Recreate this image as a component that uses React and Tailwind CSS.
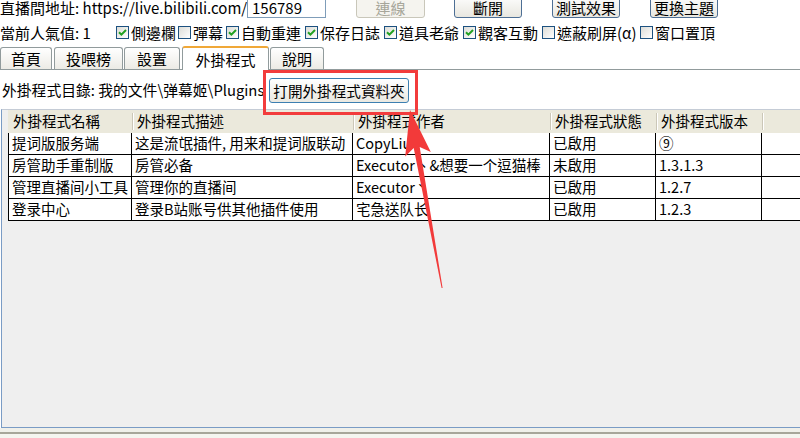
import React from "react";

const Check = ({ on }) => (
  <span className="relative inline-flex h-[13px] w-[13px] shrink-0 items-center justify-center border border-[#1c5180] bg-linear-to-br from-[#dcdcd7] to-white">
    {on && (
      <svg width="9" height="9" viewBox="0 0 9 9" className="block">
        <path d="M1 4.2 L3.4 6.6 L8 2" fill="none" stroke="#21a121" strokeWidth="2" />
      </svg>
    )}
  </span>
);

const CB = ({ on, label, w }) => (
  <div className={`flex items-center gap-[2px] ${w}`}>
    <Check on={on} />
    <span className="whitespace-nowrap">{label}</span>
  </div>
);

const Tab = ({ label, w, sel }) =>
  sel ? (
    <div className={`${w} relative z-10 -mb-px flex h-[24px] items-center justify-center rounded-t-[3px] border-x border-t-2 border-x-[#919b9c] border-t-[#f0a838] bg-white`}>
      {label}
    </div>
  ) : (
    <div className={`${w} flex h-[22px] items-center justify-center rounded-t-[3px] border border-b-0 border-[#919b9c] bg-linear-to-b from-white to-[#ecebe5]`}>
      {label}
    </div>
  );

const cols = ["w-[124px]", "w-[221px]", "w-[197px]", "w-[106px]", "w-[106px]", "flex-1"];
const headers = ["外掛程式名稱", "外掛程式描述", "外掛程式作者", "外掛程式狀態", "外掛程式版本", ""];
const rows = [
  ["提词版服务端", "这是流氓插件, 用来和提词版联动", "CopyLiu", "已啟用", "⑨", ""],
  ["房管助手重制版", "房管必备", "Executor丶&想要一个逗猫棒", "未啟用", "1.3.1.3", ""],
  ["管理直播间小工具", "管理你的直播间", "Executor丶", "已啟用", "1.2.7", ""],
  ["登录中心", "登录B站账号供其他插件使用", "宅急送队长", "已啟用", "1.2.3", ""],
];

export default function App() {
  return (
    <div className="relative h-[438px] w-[800px] overflow-hidden bg-white font-['Noto_Sans_CJK_TC','Noto_Sans_CJK_SC',sans-serif] text-[14.5px] leading-none text-black">
      {/* row 1 */}
      <div className="-mt-[6px] flex h-[24px] items-center">
        <div className="w-[247px] whitespace-nowrap pt-[2px] text-[15px]">直播間地址: https://live.bilibili.com/</div>
        <div className="flex h-[23px] w-[79px] items-center border border-[#7f9db9] bg-white pl-[4px] pt-[2px] text-[15px]">156789</div>
        <button className="ml-[30px] flex h-[24px] w-[69px] items-center justify-center rounded-[3px] border border-[#c9c7ba] bg-[#f5f4ef] pt-[2px] text-[15px] text-[#a7a69a]">連線</button>
        <button className="ml-[29px] flex h-[24px] w-[68px] items-center justify-center rounded-[3px] border border-[#4d6f95] bg-linear-to-b from-white to-[#e8e7e0] pt-[2px] text-[15px]">斷開</button>
        <button className="ml-[30px] flex h-[24px] w-[68px] items-center justify-center rounded-[3px] border border-[#4d6f95] bg-linear-to-b from-white to-[#e8e7e0] pt-[2px] text-[15px]">測試效果</button>
        <button className="ml-[30px] flex h-[24px] w-[68px] items-center justify-center rounded-[3px] border border-[#4d6f95] bg-linear-to-b from-white to-[#e8e7e0] pt-[2px] text-[15px]">更換主題</button>
      </div>

      {/* row 2 */}
      <div className="flex h-[27px] items-center pt-[2px] text-[15px]">
        <div className="w-[116px] whitespace-nowrap">當前人氣值: 1</div>
        <CB on label="側邊欄" w="w-[62px]" />
        <CB label="彈幕" w="w-[48px]" />
        <CB on label="自動重連" w="w-[79px]" />
        <CB on label="保存日誌" w="w-[79px]" />
        <CB on label="道具老爺" w="w-[79px]" />
        <CB on label="觀客互動" w="w-[79px]" />
        <CB label="遮蔽刷屏(α)" w="w-[98px]" />
        <CB label="窗口置頂" w="w-[90px]" />
      </div>

      {/* tabs */}
      <div className="flex h-[24px] items-end gap-[2px] text-[15px]">
        <Tab label="首頁" w="w-[52px]" />
        <Tab label="投喂榜" w="w-[69px]" />
        <div className="-ml-px"><Tab label="設置" w="w-[56px]" /></div>
        <Tab label="外掛程式" w="w-[87px]" sel />
        <div className="-ml-px"><Tab label="說明" w="w-[54px]" /></div>
      </div>

      {/* panel */}
      <div className="border-t border-[#919b9c]">
        <div className="flex h-[39px] items-center bg-white pt-[2px]">
          <div className="w-[269px] whitespace-nowrap pl-[2px] text-[14.8px]">外掛程式目錄: 我的文件\弹幕姬\Plugins</div>
          <button className="flex h-[25px] w-[140px] items-center justify-center rounded-[3px] border border-[#3c7fb1] bg-linear-to-b from-white to-[#e9e8e1] pt-[1px] text-[14.6px]">打開外掛程式資料夾</button>
        </div>

        <div className="ml-[1px] flex h-[319px] flex-col border-b border-l border-t border-[#7a9cc5] border-t-[#c5ccd6] bg-[#efefef] pl-[6px]">
          <div className="flex h-[23px] bg-[#ebe9dc]">
            {headers.map((h, i) => (
              <div key={i} className={`${cols[i]} flex items-center justify-between pl-[5px]`}>
                <span className="whitespace-nowrap">{h}</span>
                {i < 5 && (
                  <span className="-mr-[2px] flex h-[17px]">
                    <span className="w-px bg-[#cbc7b8]" />
                    <span className="w-px bg-white" />
                  </span>
                )}
              </div>
            ))}
          </div>
          <div className="border-l border-black">
            {rows.map((r, ri) => (
              <div key={ri} className="flex h-[22px] border-b border-black bg-white">
                {r.map((c, i) => (
                  <div key={i} className={`${cols[i]} flex items-center whitespace-nowrap ${i === 0 ? "pl-[4px]" : "pl-[3px]"} ${i < 5 ? "border-r border-black" : ""} ${i === 0 ? "-ml-px" : ""}`}>
                    {c}
                  </div>
                ))}
              </div>
            ))}
          </div>
        </div>
        <div className="h-[4px] bg-[#f0f0ea]" />
        <div className="h-[2px] bg-[#a7a69a]" />
        <div className="h-[10px] bg-[#f5f5f0]" />
      </div>

      {/* annotation: red box */}
      <div className="pointer-events-none absolute left-[263px] top-[70px] h-[45px] w-[155px] border-[3px] border-[#f23c3c]" />
      {/* annotation: arrow */}
      <svg className="pointer-events-none absolute left-0 top-0" width="800" height="438" viewBox="0 0 800 438">
        <polygon
          points="410,110 430.8,152 419.7,146.9 442.6,288 441.6,288 413.7,147.9 405.2,156.6"
          fill="#f23a3a"
        />
      </svg>
    </div>
  );
}
